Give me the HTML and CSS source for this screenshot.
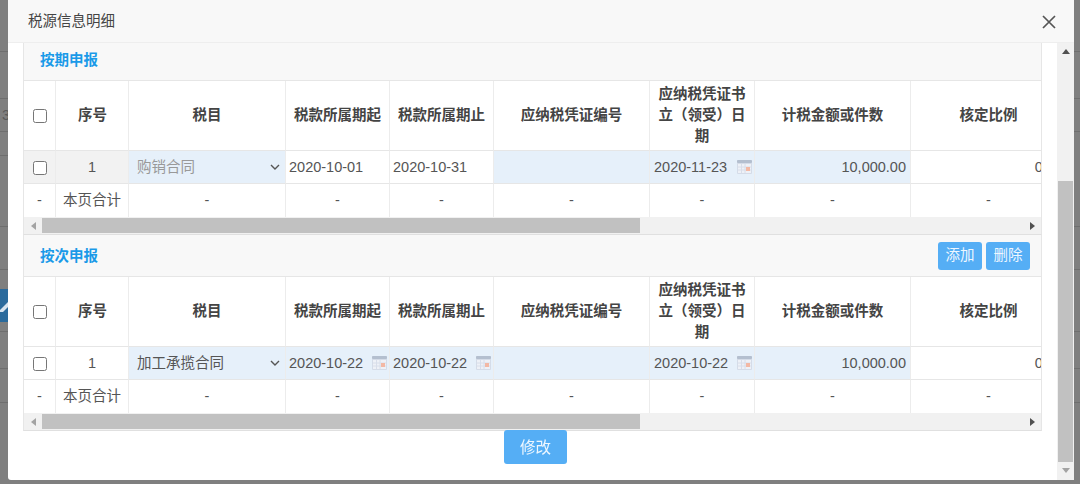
FILE: index.html
```html
<!doctype html>
<html lang="zh-CN">
<head>
    <meta charset="UTF-8">
    <title>税源信息明细</title>
    <link rel="stylesheet" href="styles.css">
</head>
<body>
    <!-- dimmed page behind the dialog -->
    <div class="behind">
        <div class="behind-row r1"></div>
        <div class="behind-row r2"></div>
        <div class="behind-row r3"><span class="behind-num">3</span></div>
        <div class="behind-row r4"><span class="behind-tick"></span></div>
        <div class="behind-row r5"></div>
        <div class="behind-row r6"></div>
        <div class="behind-row r7">
            <span class="behind-btn">
                <svg width="8" height="33" viewBox="0 0 8 33"><path d="M0 21l8-8v5l-5 5H0z" fill="#d5e2ee"/></svg>
            </span>
        </div>
        <div class="behind-row r8"></div>
        <div class="behind-row r9"></div>
    </div>

    <svg class="sprites" width="0" height="0">
        <symbol id="cal" viewBox="0 0 15 14">
            <rect x="0" y="0" width="15" height="14" rx="1" fill="#d5dce8"/>
            <rect x="0" y="0" width="15" height="3" rx="1" fill="#b4bfcf"/>
            <rect x="1" y="4" width="13" height="9" fill="#eef1f7"/>
            <path d="M4.5 4v9M8 4v9M1 7h13M1 10h13" stroke="#d8deea" stroke-width="1" fill="none"/>
            <rect x="9" y="7" width="4" height="4" fill="#f3b8a4"/>
        </symbol>
        <symbol id="chev" viewBox="0 0 10 6">
            <path d="M1 1l4 4 4-4" stroke="#555" stroke-width="1.4" fill="none"/>
        </symbol>
    </svg>

    <div class="modal">
        <div class="modal-header">
            <span class="modal-title">税源信息明细</span>
            <svg class="modal-close" width="14" height="14" viewBox="0 0 14 14">
                <path d="M1 1l12 12M13 1L1 13" stroke="#555" stroke-width="1.7" fill="none"/>
            </svg>
        </div>
        <div class="modal-body">
            <div class="modal-content">
                <div class="panel">
                    <div class="panel-head head-first">
                        <span class="panel-title">按期申报</span>
                    </div>
                    <div class="table-wrap">
                        <table class="grid">
                            <thead>
                                <tr>
                                    <th class="c-check"><input type="checkbox"></th>
                                    <th class="c-seq">序号</th>
                                    <th class="c-item">税目</th>
                                    <th class="c-date">税款所属期起</th>
                                    <th class="c-date">税款所属期止</th>
                                    <th class="c-item">应纳税凭证编号</th>
                                    <th class="c-vdate">应纳税凭证书立（领受）日期</th>
                                    <th class="c-item">计税金额或件数</th>
                                    <th class="c-item">核定比例</th>
                                </tr>
                            </thead>
                            <tbody>
                                <tr class="row-data">
                                    <td class="locked"><input type="checkbox"></td>
                                    <td class="locked">1</td>
                                    <td class="edit"><div class="select is-disabled"><span>购销合同</span><svg width="10" height="6"><use href="#chev"/></svg></div></td>
                                    <td class="text-l">2020-10-01</td>
                                    <td class="text-l">2020-10-31</td>
                                    <td class="edit"></td>
                                    <td class="edit"><div class="datebox"><span>2020-11-23</span><svg width="15" height="14"><use href="#cal"/></svg></div></td>
                                    <td class="edit amount">10,000.00</td>
                                    <td class="text-r">0.00</td>
                                </tr>
                                <tr class="row-total">
                                    <td>-</td>
                                    <td>本页合计</td>
                                    <td>-</td>
                                    <td>-</td>
                                    <td>-</td>
                                    <td>-</td>
                                    <td>-</td>
                                    <td>-</td>
                                    <td>-</td>
                                </tr>
                            </tbody>
                        </table>
                    </div>
                    <div class="hbar">
                        <span class="hbar-btn"><i class="arrow-left"></i></span>
                        <span class="hbar-thumb"></span>
                        <span class="hbar-rest"><i class="arrow-right"></i></span>
                    </div>
                </div>

                <div class="panel">
                    <div class="panel-head">
                        <span class="panel-title">按次申报</span>
                        <div class="panel-tools">
                            <button class="btn">添加</button>
                            <button class="btn">删除</button>
                        </div>
                    </div>
                    <div class="table-wrap">
                        <table class="grid">
                            <thead>
                                <tr>
                                    <th class="c-check"><input type="checkbox"></th>
                                    <th class="c-seq">序号</th>
                                    <th class="c-item">税目</th>
                                    <th class="c-date">税款所属期起</th>
                                    <th class="c-date">税款所属期止</th>
                                    <th class="c-item">应纳税凭证编号</th>
                                    <th class="c-vdate">应纳税凭证书立（领受）日期</th>
                                    <th class="c-item">计税金额或件数</th>
                                    <th class="c-item">核定比例</th>
                                </tr>
                            </thead>
                            <tbody>
                                <tr class="row-data">
                                    <td><input type="checkbox"></td>
                                    <td>1</td>
                                    <td class="edit"><div class="select"><span>加工承揽合同</span><svg width="10" height="6"><use href="#chev"/></svg></div></td>
                                    <td class="edit"><div class="datebox"><span>2020-10-22</span><svg width="15" height="14"><use href="#cal"/></svg></div></td>
                                    <td class="edit"><div class="datebox"><span>2020-10-22</span><svg width="15" height="14"><use href="#cal"/></svg></div></td>
                                    <td class="edit"></td>
                                    <td class="edit"><div class="datebox"><span>2020-10-22</span><svg width="15" height="14"><use href="#cal"/></svg></div></td>
                                    <td class="edit amount">10,000.00</td>
                                    <td class="text-r">0.00</td>
                                </tr>
                                <tr class="row-total">
                                    <td>-</td>
                                    <td>本页合计</td>
                                    <td>-</td>
                                    <td>-</td>
                                    <td>-</td>
                                    <td>-</td>
                                    <td>-</td>
                                    <td>-</td>
                                    <td>-</td>
                                </tr>
                            </tbody>
                        </table>
                    </div>
                    <div class="hbar">
                        <span class="hbar-btn"><i class="arrow-left"></i></span>
                        <span class="hbar-thumb"></span>
                        <span class="hbar-rest"><i class="arrow-right"></i></span>
                    </div>
                </div>

                <div class="form-actions">
                    <button class="btn btn-main">修改</button>
                </div>
            </div>

            <div class="vbar">
                <div class="vbar-top"><i class="arrow-up"></i></div>
                <div class="vbar-thumb"></div>
                <div class="vbar-end"><i class="arrow-down"></i></div>
            </div>
        </div>
    </div>
</body>
</html>
```

FILE: styles.css
```css
* {
    box-sizing: border-box;
}

html, body {
    height: 100%;
}

body {
    margin: 0;
    overflow: hidden;
    background: #7f7f7f;
    font-family: "Liberation Sans", "Noto Sans CJK SC", sans-serif;
    font-size: 14.5px;
    line-height: 21px;
    color: #555;
}

.sprites {
    position: absolute;
}

/* page behind the overlay */
.behind-row {
    border-bottom: 1px solid #6e6e6e;
    position: relative;
}

.r1 { height: 52px; }
.r2 { height: 47px; }
.r3 { height: 33px; }
.r4 { height: 95px; }
.r5 { height: 43px; }
.r6 { height: 62px; }
.r7 { height: 37px; }
.r8 { height: 34px; }
.r9 { height: 81px; border-bottom: 0; }

.behind-num {
    position: absolute;
    left: 2px;
    top: 6px;
    color: #5a5a5a;
}

.behind-tick {
    position: absolute;
    left: 0;
    top: 23px;
    width: 8px;
    height: 1px;
    background: #6e6e6e;
}

.behind-btn {
    position: absolute;
    left: 0;
    top: -43px;
    width: 8px;
    height: 33px;
    background: #2a6a9c;
}

.behind-btn svg {
    display: block;
}

/* dialog */
.modal {
    position: fixed;
    left: 8px;
    top: 0;
    width: 1066px;
    height: 480px;
    background: #fff;
    border-radius: 0 0 3px 3px;
    display: flex;
    flex-direction: column;
}

.modal-header {
    height: 43px;
    flex: none;
    background: #f8f8f8;
    border-bottom: 1px solid #eee;
    display: flex;
    align-items: center;
    justify-content: space-between;
    padding: 0 18px 0 20px;
}

.modal-title {
    color: #444;
}

.modal-close {
    margin-top: 2px;
}

.modal-body {
    flex: 1;
    display: flex;
    min-height: 0;
}

.modal-content {
    flex: 1;
    min-width: 0;
    padding: 0 15px 0 15px;
}

/* panels */
.panel {
    border-left: 1px solid #e6e6e6;
    border-right: 1px solid #e6e6e6;
    border-bottom: 1px solid #e0e0e0;
}

.panel-head {
    height: 42px;
    background: #f8f8f8;
    border-bottom: 1px solid #e6e6e6;
    display: flex;
    align-items: center;
    justify-content: space-between;
    padding: 0 11px 0 16px;
}

.head-first {
    height: 38px;
    padding-bottom: 4px;
}

.panel-title {
    color: #1a9ae8;
    font-weight: bold;
    margin-top: 2px;
}

.panel-tools {
    display: flex;
    gap: 4px;
}

.btn {
    width: 44px;
    height: 28px;
    padding: 0;
    font: inherit;
    color: #eef7ff;
    background: #55aef5;
    border: 0;
    border-radius: 3px;
}

.table-wrap {
    overflow: hidden;
}

.grid {
    width: 1043px;
    table-layout: fixed;
    border-collapse: separate;
    border-spacing: 0;
}

.c-check { width: 32px; }
.c-seq { width: 73px; }
.c-item { width: 156px; }
.c-date { width: 104px; }
.c-vdate { width: 105px; }

.grid thead th:nth-child(3) {
    width: 157px;
}

.grid th,
.grid td {
    padding: 0 4px;
    text-align: center;
    border-right: 1px solid #ececec;
    border-bottom: 1px solid #e6e6e6;
    font-weight: normal;
}

.grid th {
    height: 70px;
    padding: 0 8px;
    font-weight: bold;
    color: #444;
}

.grid th.c-seq {
    padding-left: 9px;
}

.grid input {
    width: 14px;
    height: 14px;
    margin: 0;
    vertical-align: middle;
}

.grid .c-check,
.row-data td:first-child,
.row-total td:first-child {
    padding: 0;
}

.row-data td {
    height: 33px;
}

.grid .row-total td {
    height: 33px;
    border-bottom: 0;
}

.grid td.edit {
    background: #e6f0fa;
    padding: 0 2px 0 3px;
}

.grid td.locked {
    background: #f2f2f2;
}

.grid td.text-l {
    text-align: left;
    padding-left: 3px;
}

.grid td.text-r {
    text-align: right;
    padding-right: 3px;
}

.grid td.amount {
    text-align: right;
    padding-right: 4px;
}

.select {
    display: flex;
    align-items: center;
    justify-content: space-between;
    padding: 0 3px 0 5px;
}

.is-disabled {
    color: #999;
}

.datebox {
    display: flex;
    align-items: center;
    justify-content: space-between;
    white-space: nowrap;
}

.grid td:nth-child(7) .datebox {
    padding-left: 1px;
}

/* scrollbars are plain boxes so they land the same in every panel */
.hbar {
    height: 17px;
    background: #f1f1f1;
    display: flex;
    align-items: center;
}

.hbar-btn {
    width: 18px;
    flex: none;
    display: flex;
    justify-content: center;
}

.hbar-thumb {
    width: 598px;
    height: 15px;
    background: #c1c1c1;
}

.hbar-rest {
    flex: 1;
    display: flex;
    justify-content: flex-end;
    padding-right: 6px;
}

.arrow-left,
.arrow-right,
.arrow-up,
.arrow-down {
    display: block;
    width: 0;
    height: 0;
    border-style: solid;
    border-color: transparent;
}

.arrow-left {
    border-width: 4px 5px 4px 0;
    border-right-color: #a3a3a3;
}

.arrow-right {
    border-width: 4px 0 4px 5px;
    border-left-color: #505050;
}

.arrow-up {
    border-width: 0 4px 5px;
    border-bottom-color: #505050;
}

.arrow-down {
    border-width: 5px 4px 0;
    border-top-color: #a3a3a3;
}

.vbar {
    width: 17px;
    flex: none;
    background: #f1f1f1;
    display: flex;
    flex-direction: column;
    align-items: center;
}

.vbar-top {
    height: 138px;
    padding-top: 6px;
}

.vbar-thumb {
    flex: 1;
    width: 15px;
    background: #c1c1c1;
}

.vbar-end {
    height: 18px;
    padding-top: 6px;
}

.form-actions {
    display: flex;
    justify-content: center;
    padding-left: 6px;
    margin-top: -1px;
}

.btn-main {
    width: 63px;
    height: 34px;
    font-size: 15.5px;
}
```
